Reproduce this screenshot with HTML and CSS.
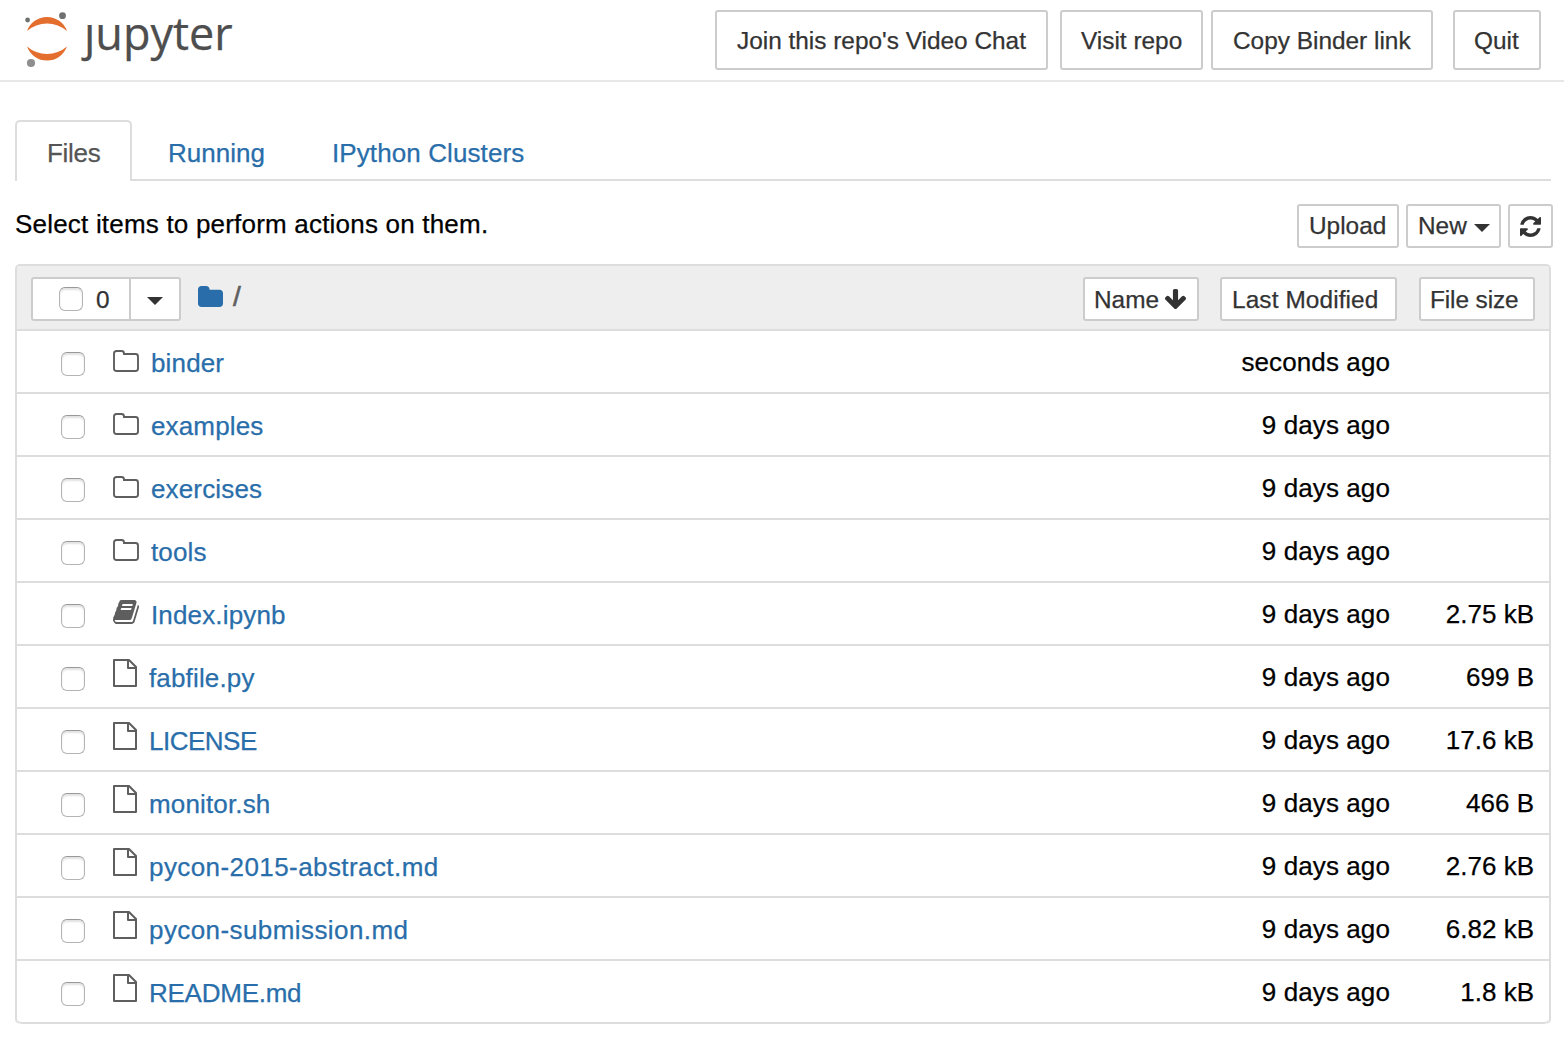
FILE: index.html
```html
<!DOCTYPE html>
<html lang="en">
<head>
<meta charset="utf-8">
<title>Home Page</title>
<link rel="stylesheet" href="styles.css">
</head>
<body>
<svg class="sprite" width="0" height="0">
  <symbol id="folder" viewBox="0 0 26 22"><path d="M1 3.500Q1 1 3.500 1H8.500Q11 1 11 3.500V4H22.500Q25 4 25 6.500V18.500Q25 21 22.500 21H3.500Q1 21 1 18.500Z" fill="none" stroke="currentColor" stroke-width="1.900"/></symbol>
  <symbol id="file" viewBox="0 0 24 28"><path d="M1 1H16L23 8V27H1ZM15 1V9H23" fill="none" stroke="currentColor" stroke-width="2" stroke-linejoin="round"/></symbol>
  <symbol id="book" viewBox="0 128 1664 1536"><path fill="currentColor" d="M1639 478q40 57 18 129l-275 906q-19 64-76.500 107.500t-122.500 43.500h-923q-77 0-148.500-53.500t-99.500-131.500q-24-67-2-127 0-4 3-27t4-37q1-8-3-21.500t-3-19.500q2-11 8-21t16.500-23.500 16.500-23.500q23-38 45-91.500t30-91.500q3-10 .5-30t-.5-28q3-11 17-28t17-23q21-36 42-92t25-90q1-9-2.500-32t.5-28q4-13 22-30.500t22-22.500q19-26 42.500-84.500t27.500-96.500q1-8-3-25.500t-2-26.500q2-8 9-18t18-23 17-21q8-12 16.500-30.500t15-35 16-36 19.500-32 26.500-23.500 36-11.500 47.500 5.500l-1 3q38-9 51-9h761q74 0 114 56t18 130l-274 906q-36 119-71.500 153.500t-128.500 34.500h-869q-27 0-38 15-11 16-1 43 24 70 144 70h923q29 0 56-15.500t35-41.500l300-987q7-22 5-57 38 15 59 43zm-1064 2q-4 13 2 22.500t20 9.500h608q13 0 25.500-9.500t16.500-22.500l21-64q4-13-2-22.500t-20-9.500h-608q-13 0-25.500 9.500t-16.500 22.500zm-83 256q-4 13 2 22.500t20 9.500h608q13 0 25.500-9.500t16.500-22.500l21-64q4-13-2-22.500t-20-9.500h-608q-13 0-25.500 9.500t-16.500 22.500z"/></symbol>
</svg>
<header class="header">
  <a class="logo">
    <svg class="logo-mark" width="46" height="60" viewBox="24 10 46 60">
      <path fill="#e46e2e" d="M27 31A21.300 21.300 0 0 1 67 31A30.400 30.400 0 0 0 27 31ZM27 46.500A21.300 21.300 0 0 0 67 46.500A30.400 30.400 0 0 1 27 46.500Z"/>
      <circle cx="27.600" cy="20" r="2.400" fill="#6f7070"/><circle cx="62.500" cy="15.700" r="3.400" fill="#6f7070"/><circle cx="31" cy="63" r="4.100" fill="#8e8e8e"/>
    </svg>
    <span class="wordmark">&#x237;upyter</span>
  </a>
  <div class="header-actions">
    <button class="btn lg b-join">Join this repo's Video Chat</button>
    <button class="btn lg b-visit">Visit repo</button>
    <button class="btn lg b-copy">Copy Binder link</button>
    <button class="btn lg b-quit">Quit</button>
  </div>
</header>
<main class="main">
  <nav class="tabs">
    <a class="tab active">Files</a>
    <a class="tab running">Running</a>
    <a class="tab clusters">IPython Clusters</a>
  </nav>
  <div class="toolbar">
    <span class="hint">Select items to perform actions on them.</span>
    <div class="tools">
      <button class="btn b-upload">Upload</button>
      <button class="btn b-new">New<i class="caret"></i></button>
      <button class="btn b-refresh"><svg width="21" height="21" viewBox="0 0 1536 1536"><path fill="currentColor" d="M1511 928q0 5-1 7-64 268-268 434.500t-478 166.500q-146 0-282.500-55t-243.500-157l-129 129q-19 19-45 19t-45-19-19-45v-448q0-26 19-45t45-19h448q26 0 45 19t19 45-19 45l-137 137q71 66 161 102t187 36q134 0 250-65t186-179q11-17 53-117 8-23 30-23h192q13 0 22.500 9.500t9.500 22.500zm25-800v448q0 26-19 45t-45 19h-448q-26 0-45-19t-19-45 19-45l138-138q-148-137-349-137-134 0-250 65t-186 179q-11 17-53 117-8 23-30 23h-199q-13 0-22.500-9.500t-9.500-22.500v-7q65-268 270-434.500t480-166.500q146 0 284 55.500t245 156.500l130-129q19-19 45-19t45 19 19 45z"/></svg></button>
    </div>
  </div>
  <section class="list">
    <div class="list-head">
      <div class="select"><button class="btn b-all"><i class="check"></i><span>0</span></button><button class="btn b-menu"><i class="caret"></i></button></div>
      <svg class="home" width="25" height="21" viewBox="0 128 1664 1408" preserveAspectRatio="none"><path fill="currentColor" d="M1664 608v704q0 92-66 158t-158 66h-1216q-92 0-158-66t-66-158v-960q0-92 66-158t158-66h320q92 0 158 66t66 158v32h672q92 0 158 66t66 158z"/></svg>
      <span class="slash">/</span>
      <button class="btn b-name">Name<svg width="21" height="20" viewBox="53 128 1558 1483"><path fill="currentColor" d="M1611 832q0 53-37 90l-651 652q-39 37-91 37-53 0-90-37l-651-652q-38-36-38-90 0-53 38-91l74-75q39-37 91-37 53 0 90 37l294 294v-704q0-52 38-90t90-38h128q52 0 90 38t38 90v704l294-294q37-37 90-37 52 0 91 37l75 75q37 39 37 91z"/></svg></button>
      <button class="btn b-modified">Last Modified</button>
      <button class="btn b-size">File size</button>
    </div>
    <div class="row"><i class="check"></i><svg class="icon folder"><use href="#folder"/></svg><a class="name">binder</a><span class="date sec">seconds ago</span><span class="size"></span></div>
    <div class="row"><i class="check"></i><svg class="icon folder"><use href="#folder"/></svg><a class="name">examples</a><span class="date">9 days ago</span><span class="size"></span></div>
    <div class="row"><i class="check"></i><svg class="icon folder"><use href="#folder"/></svg><a class="name">exercises</a><span class="date">9 days ago</span><span class="size"></span></div>
    <div class="row"><i class="check"></i><svg class="icon folder"><use href="#folder"/></svg><a class="name">tools</a><span class="date">9 days ago</span><span class="size"></span></div>
    <div class="row"><i class="check"></i><svg class="icon book"><use href="#book"/></svg><a class="name">Index.ipynb</a><span class="date">9 days ago</span><span class="size">2.75 kB</span></div>
    <div class="row"><i class="check"></i><svg class="icon file"><use href="#file"/></svg><a class="name">fabfile.py</a><span class="date">9 days ago</span><span class="size">699 B</span></div>
    <div class="row"><i class="check"></i><svg class="icon file"><use href="#file"/></svg><a class="name caps">LICENSE</a><span class="date">9 days ago</span><span class="size">17.6 kB</span></div>
    <div class="row"><i class="check"></i><svg class="icon file"><use href="#file"/></svg><a class="name">monitor.sh</a><span class="date">9 days ago</span><span class="size">466 B</span></div>
    <div class="row"><i class="check"></i><svg class="icon file"><use href="#file"/></svg><a class="name long">pycon-2015-abstract.md</a><span class="date">9 days ago</span><span class="size">2.76 kB</span></div>
    <div class="row"><i class="check"></i><svg class="icon file"><use href="#file"/></svg><a class="name long">pycon-submission.md</a><span class="date">9 days ago</span><span class="size">6.82 kB</span></div>
    <div class="row"><i class="check"></i><svg class="icon file"><use href="#file"/></svg><a class="name caps-md">README.md</a><span class="date">9 days ago</span><span class="size">1.8 kB</span></div>
  </section>
</main>
</body>
</html>
```
FILE: styles.css
```css
* { box-sizing: border-box; }
body { margin: 0; background: #fff; color: #000; font: 26px/36px "Liberation Sans", Arial, sans-serif; white-space: nowrap; -webkit-text-stroke: .25px; }
svg { display: block; flex: none; }
.sprite { display: none; }

.header { display: flex; justify-content: space-between; height: 82px; padding: 10px 23px 0 24px; border-bottom: 2px solid #e7e7e7; }
.logo { display: flex; }
.wordmark { margin: -10px 0 0 14px; font: 45px/66px "Open Sans", sans-serif; color: #4e4e4e; }
.header-actions { display: flex; }

.btn { display: flex; align-items: center; flex: none; height: 44px; margin: 0; padding: 0 0 0 10px; border: 2px solid #ccc; border-radius: 3px; background: #fff; color: #333; font: 24.4px/34px "Liberation Sans", Arial, sans-serif; }
.lg { height: 60px; padding: 2px 0 0 20px; }
.b-join { width: 333px; margin-right: 12px; }
.b-visit { width: 143px; margin-right: 8px; padding-left: 19px; }
.b-copy { width: 222px; margin-right: 20px; }
.b-quit { width: 88px; padding-left: 19px; }

.main { padding: 38px 13px 0 15px; }
.tabs { display: flex; height: 61px; border-bottom: 2px solid #ddd; }
.tab { height: 61px; padding-top: 15px; color: #296eaa; line-height: 37px; }
.active { width: 117px; padding: 13px 0 0 30px; border: 2px solid #ddd; border-bottom: 0; border-radius: 5px 5px 0 0; background: #fff; color: #555; letter-spacing: -.3px; }
.running { width: 164px; padding-left: 36px; }
.clusters { padding-left: 36px; letter-spacing: .1px; }

.toolbar { display: flex; justify-content: space-between; height: 83px; padding-top: 23px; margin-right: -2px; }
.hint { margin-top: 2px; letter-spacing: .2px; }
.tools { display: flex; }
.b-upload { width: 102px; margin-right: 7px; }
.b-new { width: 95px; margin-right: 7px; }
.b-refresh { width: 45px; }
.caret { width: 0; border: 8px solid transparent; border-top-color: #333; border-bottom: 0; }
.b-new .caret { margin: 4px 0 0 7px; }

.list { border: 2px solid #ddd; border-bottom: 0; border-radius: 5px; overflow: hidden; }
.list-head { display: flex; align-items: flex-start; height: 65px; padding: 11px 14px 0; border-bottom: 2px solid #ddd; background: #eee; }
.select { display: flex; }
.b-all { width: 100px; padding-left: 26px; border-radius: 3px 0 0 3px; }
.b-all span { margin: 2px 0 0 13px; }
.b-menu { width: 52px; margin-left: -2px; padding-left: 16px; border-radius: 0 3px 3px 0; }
.b-menu .caret { margin-top: 4px; }
.check { flex: none; width: 24px; height: 24px; border: 1.5px solid #b4b4b4; border-top-color: #999; border-radius: 6px; background: #fff; box-shadow: inset 0 2px 2px #e2e2e2; }
.home { margin: 9px 0 0 17px; color: #296eaa; }
.slash { margin: 2px auto 0 10px; color: #5e5e5e; font-size: 28px; -webkit-text-stroke: .6px; }
.b-name, .b-modified, .b-size { padding-top: 2px; }
.b-name { width: 116px; margin-right: 21px; padding-left: 9px; }
.b-name svg { margin: -2px 0 0 6px; }
.b-modified { width: 177px; margin-right: 22px; letter-spacing: .1px; }
.b-size { width: 116px; padding-left: 9px; letter-spacing: -.1px; }

.row { display: flex; height: 63px; padding: 0 15px 0 44px; border-bottom: 2px solid #ddd; line-height: 61px; }
.row:last-child { border-radius: 0 0 5px 5px; }
.row .check { margin-top: 21px; }
.icon { margin-left: 28px; color: #5e5e5e; }
.folder { width: 26px; height: 22px; margin-top: 19px; }
.book { width: 26px; height: 24px; margin-top: 17px; }
.file { width: 24px; height: 28px; margin-top: 13px; }
.name { margin: 2px auto 0 12px; color: #296eaa; letter-spacing: .15px; }
.caps { letter-spacing: -.5px; }
.caps-md { letter-spacing: -.25px; }
.long { letter-spacing: .42px; }
.date, .size { margin-top: 1px; }
.date { margin-right: -1px; letter-spacing: .1px; }
.size { width: 145px; text-align: right; }
```
